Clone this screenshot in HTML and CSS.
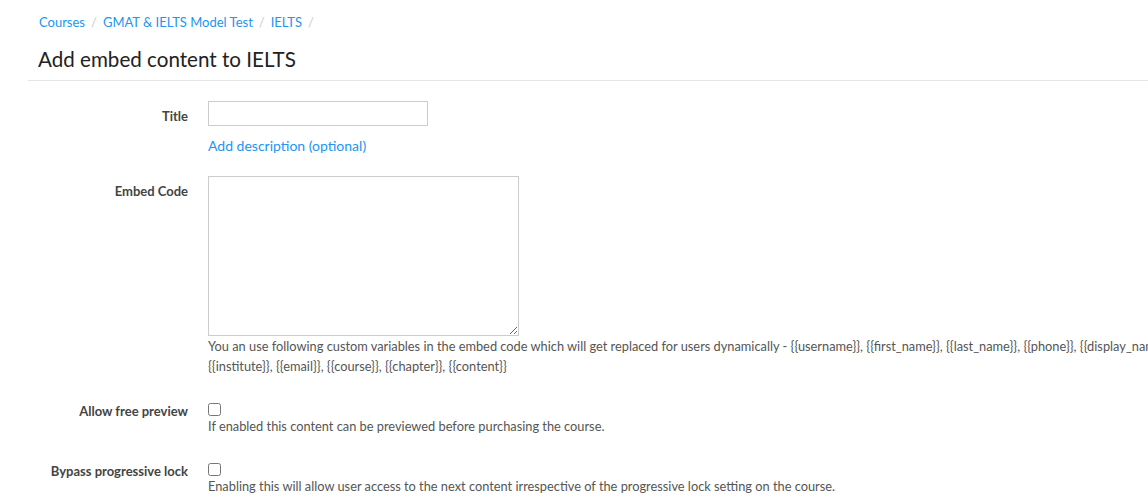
FILE: index.html
```html
<!DOCTYPE html>
<html lang="en">
<head>
    <meta charset="UTF-8">
    <title>Add embed content to IELTS</title>
    <link rel="stylesheet" href="styles.css">
</head>
<body>
    <div class="page">
        <ol class="breadcrumb">
            <li><a href="#">Courses</a></li>
            <li><a href="#">GMAT &amp; IELTS Model Test</a></li>
            <li><a href="#">IELTS</a></li>
            <li></li>
        </ol>

        <h1 class="page-title">Add embed content to IELTS</h1>

        <form class="form">
            <div class="form-row">
                <label class="form-label" for="title">Title</label>
                <div class="form-control-wrap">
                    <input type="text" id="title" class="text-input">
                    <a href="#" class="add-desc">Add description (optional)</a>
                </div>
            </div>

            <div class="form-row">
                <label class="form-label" for="embed">Embed Code</label>
                <div class="form-control-wrap">
                    <textarea id="embed" class="code-input"></textarea>
                    <p class="help">You an use following custom variables in the embed code which will get replaced for users dynamically - {{username}}, {{first_name}}, {{last_name}}, {{phone}}, {{display_name}}, {{institute}}, {{email}}, {{course}}, {{chapter}}, {{content}}</p>
                </div>
            </div>

            <div class="form-row">
                <label class="form-label" for="preview">Allow free preview</label>
                <div class="form-control-wrap">
                    <input type="checkbox" id="preview" class="check">
                    <p class="help">If enabled this content can be previewed before purchasing the course.</p>
                </div>
            </div>

            <div class="form-row">
                <label class="form-label" for="bypass">Bypass progressive lock</label>
                <div class="form-control-wrap">
                    <input type="checkbox" id="bypass" class="check">
                    <p class="help">Enabling this will allow user access to the next content irrespective of the progressive lock setting on the course.</p>
                </div>
            </div>
        </form>
    </div>
</body>
</html>
```

FILE: styles.css
```css
* {
    box-sizing: border-box;
    margin: 0;
    padding: 0;
}

html, body {
    overflow: hidden;
}

body {
    font-family: Lato, 'Open Sans', sans-serif;
    font-size: 13px;
    color: #333;
    background: #fff;
}

a {
    color: #2196f3;
    text-decoration: none;
}

.page {
    width: 1320px;
    padding: 13px 0 0 28px;
}

.breadcrumb {
    list-style: none;
    display: flex;
    padding-left: 11px;
    line-height: 18px;
}

.breadcrumb li + li::before {
    content: "/";
    color: #ccc;
    padding: 0 6px;
}

.page-title {
    font-size: 20.6px;
    font-weight: 400;
    color: #222;
    padding: 16px 0 9px 10px;
    border-bottom: 1px solid #e5e5e5;
    line-height: 24px;
}

.form {
    padding-top: 20px;
}

.form-row {
    display: grid;
    grid-template-columns: 160px 1fr;
    column-gap: 20px;
    margin-bottom: 20px;
}

.form-label {
    text-align: right;
    font-weight: 700;
    font-size: 13px;
    line-height: 18px;
    color: #444;
    padding-top: 6px;
}

.form-control-wrap {
    display: flex;
    flex-direction: column;
    align-items: flex-start;
}

.text-input {
    width: 220px;
    height: 25px;
    border: 1px solid #ccc;
    font: inherit;
    padding: 2px 6px;
}

.add-desc {
    margin-top: 10px;
    font-size: 14px;
    line-height: 20px;
}

.code-input {
    width: 311px;
    height: 160px;
    border: 1px solid #ccc;
    font: inherit;
    padding: 4px 6px;
    resize: vertical;
}

.help {
    font-size: 12.8px;
    color: #555;
    line-height: 20px;
    width: 1010px;
}

.check {
    width: 13px;
    height: 13px;
    margin: 7px 0 0;
}
```
